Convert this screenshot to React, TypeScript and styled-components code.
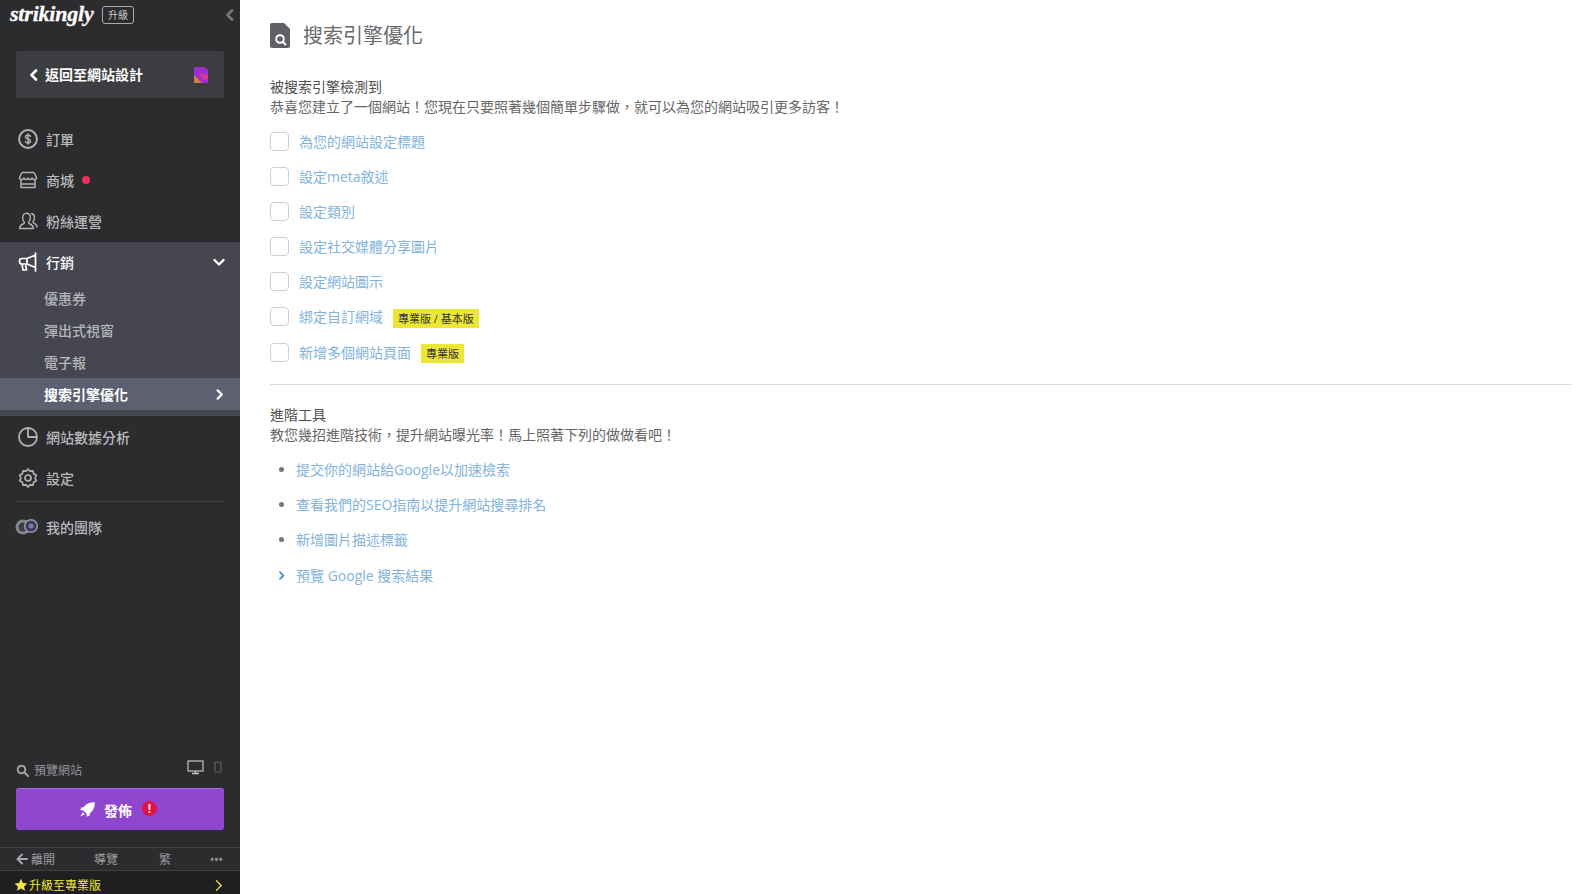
import React from "react";
import styled, { createGlobalStyle } from "styled-components";

const Global = createGlobalStyle`
  html, body { margin: 0; padding: 0; height: 100%; background: #fff; }
  body { font-family: "Open Sans", "Noto Sans CJK TC", sans-serif; }
  * { box-sizing: border-box; }
`;

const Page = styled.div`
  display: flex;
  width: 1595px;
  height: 894px;
  overflow: hidden;
`;
const Sidebar = styled.aside`
  width: 240px;
  height: 894px;
  flex: none;
  background: #2c2c2e;
  display: flex;
  flex-direction: column;
  color: #b9babd;
`;
const TopBar = styled.div`
  height: 30px;
  display: flex;
  align-items: center;
  padding: 0 4px 0 10px;
`;
const Logo = styled.span`
  font-family: "Liberation Serif", serif;
  font-style: italic;
  font-weight: 700;
  font-size: 22px;
  line-height: 30px;
  color: #fff;
  width: 84px;
  letter-spacing: -0.2px;
  margin-top: -2px;
  -webkit-text-stroke: 0.3px #fff;
`;
const UpgradeTag = styled.span`
  width: 32px;
  height: 18px;
  margin-left: 8px;
  border: 1px solid #a9aaad;
  border-radius: 3px;
  font-size: 10px;
  line-height: 16px;
  text-align: center;
  color: #c9cacc;
`;
const Collapse = styled.span`
  margin-left: auto;
  display: flex;
  color: #77787b;
`;
const BackButton = styled.div`
  margin: 21px 16px 0;
  height: 47px;
  background: #3c3d41;
  border-radius: 3px;
  display: flex;
  align-items: center;
  padding: 0 15px 0 12px;
  color: #fff;
  font-size: 14px;
  font-weight: 700;
  gap: 3px;
`;
const BackLabel = styled.span`
  margin-left: 2px;
  margin-top: -1px;
`;
const SiteThumb = styled.svg`
  margin-left: auto;
`;
const Nav = styled.nav`
  margin-top: 20px;
  display: flex;
  flex-direction: column;
`;
const NavItem = styled.div<{ $light?: boolean; $head?: boolean }>`
  height: ${(p) => (p.$head ? "40px" : "41px")};
  display: flex;
  align-items: center;
  padding: 0 15px 0 18px;
  gap: 8px;
  font-size: 14px;
  font-weight: 500;
  color: ${(p) => (p.$light ? "#fff" : "#b9babd")};
`;
const IconBox = styled.span`
  width: 20px;
  height: 20px;
  display: flex;
  align-items: center;
  justify-content: center;
  flex: none;
`;
const TeamIcon = styled.svg`
  flex: none;
  margin-left: -3px;
`;
const Dot = styled.span`
  width: 8px;
  height: 8px;
  border-radius: 50%;
  background: #e8305a;
`;
const Group = styled.div`
  margin-top: 1px;
  padding-bottom: 6px;
  background: #45464f;
`;
const Chevron = styled.span<{ $nudge?: boolean; $yellow?: boolean }>`
  margin-left: auto;
  display: flex;
  color: ${(p) => (p.$yellow ? "#f0e63c" : "#fff")};
  margin-right: ${(p) => (p.$nudge ? "-1px" : "0")};
`;
const SubItem = styled.div<{ $active?: boolean }>`
  height: 32px;
  display: flex;
  align-items: center;
  padding: 0 16px 0 44px;
  font-size: 14px;
  font-weight: ${(p) => (p.$active ? 700 : 500)};
  color: ${(p) => (p.$active ? "#fff" : "#b4b5ba")};
  background: ${(p) => (p.$active ? "#5c6070" : "transparent")};
`;
const Divider = styled.div`
  height: 1px;
  margin: 3px 16px 4px;
  background: #3f4043;
`;
const Spacer = styled.div`
  flex: 1;
`;
const PreviewRow = styled.div`
  display: flex;
  align-items: center;
  padding: 0 18px 0 16px;
  height: 26px;
  font-size: 12px;
  color: #919296;
  gap: 5px;
`;
const Devices = styled.span`
  margin-left: auto;
  display: flex;
  align-items: center;
  gap: 10px;
  margin-top: -6px;
`;
const Publish = styled.div`
  margin: 5px 16px 0;
  height: 42px;
  border-radius: 3px;
  background: #8f46cf;
  border-top: 1px solid #a56be0;
  color: #fff;
  font-size: 14px;
  font-weight: 700;
  display: flex;
  align-items: center;
  justify-content: center;
  gap: 9px;
  padding-right: 3px;
`;
const Alert = styled.span`
  width: 15px;
  height: 15px;
  border-radius: 50%;
  background: #e3123e;
  color: #fff;
  font-size: 12px;
  font-weight: 700;
  line-height: 15px;
  text-align: center;
  margin-bottom: 3px;
  margin-left: 1px;
`;
const BottomBar = styled.div`
  margin-top: 17px;
  height: 24px;
  border-top: 1px solid #404144;
  border-bottom: 1px solid #404144;
  display: grid;
  grid-template-columns: 78px 65px 50px 1fr;
  align-items: center;
  padding: 0 17px 0 16px;
  font-size: 12px;
  color: #999a9e;
`;
const BottomCell = styled.span`
  display: flex;
  align-items: center;
  gap: 3px;
`;
const Dots = styled.span`
  justify-self: end;
  font-size: 10px;
  font-weight: 700;
  letter-spacing: 0.5px;
  line-height: 12px;
  color: #8f9094;
`;
const UpgradeRow = styled.div`
  height: 23px;
  flex: none;
  background: #1f1f21;
  display: flex;
  align-items: center;
  padding: 5px 15px 0 14px;
  color: #f0e63c;
  font-size: 12px;
  gap: 1px;
`;
const Main = styled.main`
  flex: 1;
  padding: 0 24px 0 30px;
  color: #555;
  font-size: 14px;
`;
const Title = styled.h1`
  margin: 21px 0 0;
  height: 29px;
  display: flex;
  align-items: center;
  gap: 13px;
  font-size: 20px;
  font-weight: 400;
  color: #68696c;
  line-height: 29px;
`;
const Section = styled.section<{ $first?: boolean }>`
  line-height: 20px;
  margin-top: ${(p) => (p.$first ? "27px" : "0")};
`;
const SectionHead = styled.div`
  color: #505050;
`;
const SectionText = styled.div`
  color: #666;
`;
const CheckList = styled.div`
  margin-top: 7px;
  display: flex;
  flex-direction: column;
`;
const CheckRow = styled.div<{ $tall?: boolean }>`
  height: ${(p) => (p.$tall ? "36px" : "35px")};
  display: flex;
  align-items: center;
  gap: 10px;
`;
const Box = styled.span`
  width: 19px;
  height: 19px;
  border: 1px solid #cfd0d2;
  border-radius: 4px;
  background: #fff;
  flex: none;
`;
const Link = styled.a`
  color: #82b3dc;
  font-size: 14px;
  margin-top: -1px;
`;
const Badge = styled.span`
  background: #ece636;
  color: #333;
  font-size: 11px;
  line-height: 19px;
  height: 19px;
  padding: 0 5px;
  margin-top: 3px;
`;
const Rule = styled.hr`
  border: 0;
  border-top: 1px solid #dcdcdc;
  margin: 14px 0 20px;
`;
const Bullets = styled.ul`
  list-style: none;
  margin: 7px 0 0;
  padding: 0;
`;
const Bullet = styled.li<{ $gap?: boolean }>`
  height: 35px;
  display: flex;
  align-items: center;
  margin-top: ${(p) => (p.$gap ? "1px" : "0")};
`;
const Marker = styled.span`
  width: 26px;
  flex: none;
  display: flex;
  justify-content: center;
  padding-right: 4px;
  color: #4a90c8;
`;
const Disc = styled.span`
  width: 5px;
  height: 5px;
  border-radius: 50%;
  background: #777;
`;

const Chev = ({ dir, size = 12, w = 2.4 }: { dir: "l" | "r" | "d"; size?: number; w?: number }) => (
  <svg width={size} height={size} viewBox="0 0 12 12" fill="none" stroke="currentColor" strokeWidth={w} strokeLinecap="round" strokeLinejoin="round">
    <path d={dir === "l" ? "M8 1.500 3.500 6 8 10.500" : dir === "r" ? "M4 1.500 8.500 6 4 10.500" : "M1.500 4 6 8.500 10.500 4"} />
  </svg>
);

const stroke = { fill: "none", stroke: "#b0b1b4", strokeWidth: 1.7, strokeLinejoin: "round" as const, strokeLinecap: "round" as const };

export default function App() {
  return (
    <Page>
      <Global />
      <Sidebar>
        <TopBar>
          <Logo>strikingly</Logo>
          <UpgradeTag>升級</UpgradeTag>
          <Collapse><Chev dir="l" size={12} w={2.6} /></Collapse>
        </TopBar>
        <BackButton>
          <Chev dir="l" size={12} w={2.6} />
          <BackLabel>返回至網站設計</BackLabel>
          <SiteThumb width="16" height="18" viewBox="0 0 16 18">
            <path d="M1 1h10l4 3v13H1z" fill="#9b2fd0" />
            <path d="M1 9l8 8H1z" fill="#d9784a" />
            <path d="M6 7l9 2v4l-5 1z" fill="#d23f90" />
          </SiteThumb>
        </BackButton>
        <Nav>
          <NavItem>
            <IconBox>
              <svg width="20" height="20" viewBox="0 0 20 20">
                <circle cx="10" cy="10" r="8.900" {...stroke} strokeWidth={2} />
                <path d="M12.500 7.300c-.4-.8-1.300-1.200-2.500-1.200-1.400 0-2.500.7-2.500 1.900s1.100 1.600 2.500 2 2.500.8 2.500 1.900-1.100 2-2.500 2c-1.200 0-2.100-.4-2.600-1.300M10 5v10" {...stroke} strokeWidth={1.500} />
              </svg>
            </IconBox>
            訂單
          </NavItem>
          <NavItem>
            <IconBox>
              <svg width="20" height="20" viewBox="0 0 20 20">
                <path d="M4 2.500h12l2.500 5c0 1.500-1.200 2-2.200 2s-2-.6-2.200-1.500c-.3.900-1.200 1.500-2.100 1.500S10.300 8.900 10 8c-.3.900-1.100 1.500-2 1.500S6.200 8.900 5.900 8c-.2.900-1.200 1.500-2.200 1.500s-2.200-.5-2.200-2zM3 10v7.500h14V10M3 14h14" {...stroke} strokeWidth={1.500} />
              </svg>
            </IconBox>
            商城
            <Dot />
          </NavItem>
          <NavItem>
            <IconBox>
              <svg width="20" height="20" viewBox="0 0 20 20">
                <path d="M1.500 17.500c0-3 2-4 4.500-5 .6-.3.500-1.200 0-1.800-1-1.200-1.300-2.500-1.300-4 0-2.500 1.500-4.500 3.800-4.500s3.800 2 3.800 4.500c0 1.500-.3 2.800-1.300 4-.5.600-.6 1.500 0 1.800 2.500 1 4.500 2 4.500 5zM13.500 2.500c1.800.4 3 2.100 3 4.200 0 1.500-.4 2.600-1.200 3.600-.4.500-.3 1.200.2 1.500 1.800.8 3.500 1.800 3.500 4.200" {...stroke} strokeWidth={1.400} />
              </svg>
            </IconBox>
            粉絲運營
          </NavItem>
          <Group>
            <NavItem $light $head>
              <IconBox>
                <svg width="20" height="20" viewBox="0 0 20 20" fill="none" stroke="#fff" strokeWidth="1.700" strokeLinejoin="round" strokeLinecap="round">
                  <path d="M17.500 1v18M17.500 3 9 6.500H4C2.500 6.500 1.500 7.500 1.500 9v.5c0 1.500 1 2.500 2.500 2.500h5l8.500 3.500M9 6.500V12M4 12l1 6h3.500L7.500 12" />
                </svg>
              </IconBox>
              行銷
              <Chevron><Chev dir="d" size={12} /></Chevron>
            </NavItem>
            <SubItem>優惠券</SubItem>
            <SubItem>彈出式視窗</SubItem>
            <SubItem>電子報</SubItem>
            <SubItem $active>
              搜索引擎優化
              <Chevron $nudge><Chev dir="r" size={11} /></Chevron>
            </SubItem>
          </Group>
          <NavItem>
            <IconBox>
              <svg width="20" height="20" viewBox="0 0 20 20">
                <path d="M10 1a9 9 0 1 0 9 9H10zM10 1a9 9 0 0 1 9 9" {...stroke} strokeWidth={1.800} />
              </svg>
            </IconBox>
            網站數據分析
          </NavItem>
          <NavItem>
            <IconBox>
              <svg width="20" height="20" viewBox="0 0 20 20">
                <path d="M10 1l2 2.200 3-.4.600 3 2.700 1.500L17 10l1.300 2.700-2.700 1.500-.6 3-3-.4-2 2.200-2-2.200-3 .4-.6-3-2.700-1.500L3 10 1.700 7.300l2.700-1.500.6-3 3 .4z" {...stroke} />
                <circle cx="10" cy="10" r="3" {...stroke} />
              </svg>
            </IconBox>
            設定
          </NavItem>
          <Divider />
          <NavItem>
            <IconBox>
              <TeamIcon width="24" height="18" viewBox="0 0 24 18">
                <circle cx="8" cy="9" r="7.500" fill="#85868a" />
                <circle cx="8" cy="9" r="4.500" fill="#3e3e42" />
                <circle cx="16" cy="8" r="7" fill="#9a9ba8" />
                <circle cx="16" cy="8" r="5.500" fill="#3b3b5e" />
                <circle cx="16" cy="8" r="2.500" fill="#7c7da8" />
              </TeamIcon>
            </IconBox>
            我的團隊
          </NavItem>
        </Nav>
        <Spacer />
        <PreviewRow>
          <svg width="13" height="13" viewBox="0 0 13 13" fill="none" stroke="#a0a1a5" strokeWidth="2">
            <circle cx="5.500" cy="5.500" r="3.800" />
            <path d="M8.500 8.500 12 12" strokeLinecap="round" />
          </svg>
          預覽網站
          <Devices>
            <svg width="17" height="15" viewBox="0 0 17 15" fill="none" stroke="#c4c5c8" strokeWidth="1.200">
              <rect x="1" y="1" width="15" height="10" />
              <path d="M8.500 11v2M5 13.500h7" strokeWidth="1.500" />
            </svg>
            <svg width="8" height="12" viewBox="0 0 8 12" fill="none" stroke="#5e5f63" strokeWidth="1.200">
              <rect x="1" y="1" width="6" height="10" rx="1" />
            </svg>
          </Devices>
        </PreviewRow>
        <Publish>
          <svg width="15" height="15" viewBox="0 0 16 16" fill="#fff">
            <path d="M15.800.2C10 .2 6 2 4 5.500H2L.3 8.500l3.200.6 3.400 3.400.6 3.200 3-1.700v-2C14 9.500 15.800 6 15.800.2z" />
            <path d="M3 11 .5 15.500 5 13z" />
          </svg>
          發佈
          <Alert>!</Alert>
        </Publish>
        <BottomBar>
          <BottomCell>
            <svg width="12" height="12" viewBox="0 0 12 12" fill="none" stroke="#a4a6b0" strokeWidth="2" strokeLinecap="round" strokeLinejoin="round">
              <path d="M6 1.500 1.500 6 6 10.500M2 6h9" />
            </svg>
            離開
          </BottomCell>
          <BottomCell>導覽</BottomCell>
          <BottomCell>繁</BottomCell>
          <Dots>•••</Dots>
        </BottomBar>
        <UpgradeRow>
          <svg width="14" height="14" viewBox="0 0 14 14" fill="#f0e63c">
            <path d="M7 .8l1.900 4.100 4.500.5-3.300 3 .9 4.400L7 10.600l-4 2.200.9-4.400-3.300-3 4.500-.5z" />
          </svg>
          升級至專業版
          <Chevron $yellow><Chev dir="r" size={13} w={1.200} /></Chevron>
        </UpgradeRow>
      </Sidebar>
      <Main>
        <Title>
          <svg width="20" height="25" viewBox="0 0 20 25">
            <path d="M2 0h12l6 6v17a2 2 0 0 1-2 2H2a2 2 0 0 1-2-2V2a2 2 0 0 1 2-2z" fill="#5f6063" />
            <circle cx="10" cy="16" r="3.800" fill="none" stroke="#fff" strokeWidth="2" />
            <path d="M13 19l3 3" stroke="#fff" strokeWidth="2" />
          </svg>
          搜索引擎優化
        </Title>
        <Section $first>
          <SectionHead>被搜索引擎檢測到</SectionHead>
          <SectionText>恭喜您建立了一個網站！您現在只要照著幾個簡單步驟做，就可以為您的網站吸引更多訪客！</SectionText>
        </Section>
        <CheckList>
          <CheckRow><Box /><Link>為您的網站設定標題</Link></CheckRow>
          <CheckRow><Box /><Link>設定meta敘述</Link></CheckRow>
          <CheckRow><Box /><Link>設定類別</Link></CheckRow>
          <CheckRow><Box /><Link>設定社交媒體分享圖片</Link></CheckRow>
          <CheckRow><Box /><Link>設定網站圖示</Link></CheckRow>
          <CheckRow><Box /><Link>綁定自訂網域</Link><Badge>專業版 / 基本版</Badge></CheckRow>
          <CheckRow $tall><Box /><Link>新增多個網站頁面</Link><Badge>專業版</Badge></CheckRow>
        </CheckList>
        <Rule />
        <Section>
          <SectionHead>進階工具</SectionHead>
          <SectionText>教您幾招進階技術，提升網站曝光率！馬上照著下列的做做看吧！</SectionText>
        </Section>
        <Bullets>
          <Bullet><Marker><Disc /></Marker><Link>提交你的網站給Google以加速檢索</Link></Bullet>
          <Bullet><Marker><Disc /></Marker><Link>查看我們的SEO指南以提升網站搜尋排名</Link></Bullet>
          <Bullet><Marker><Disc /></Marker><Link>新增圖片描述標籤</Link></Bullet>
          <Bullet $gap><Marker><Chev dir="r" size={9} w={2.400} /></Marker><Link>預覽 Google 搜索結果</Link></Bullet>
        </Bullets>
      </Main>
    </Page>
  );
}
